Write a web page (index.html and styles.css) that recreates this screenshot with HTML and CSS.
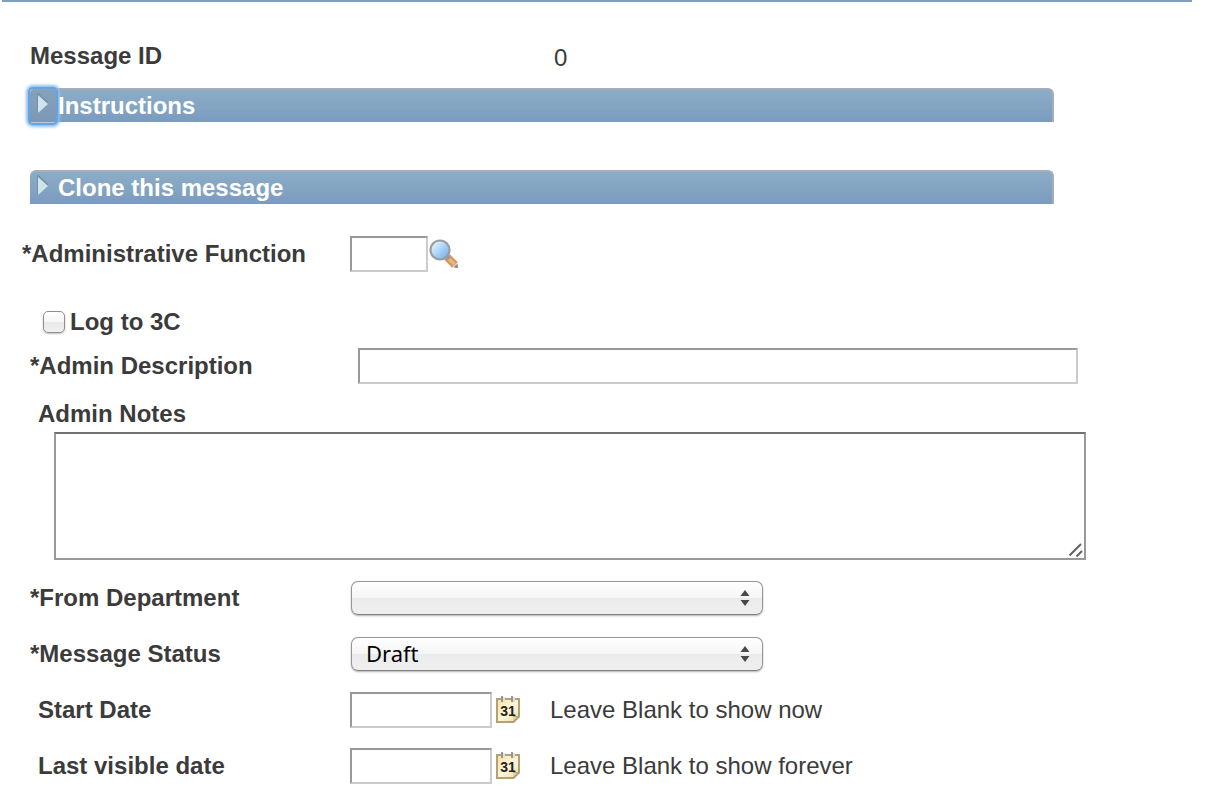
FILE: index.html
```html
<!DOCTYPE html>
<html lang="en">
<head>
<meta charset="utf-8">
<title>Message</title>
<link rel="stylesheet" href="styles.css">
</head>
<body>
<svg class="sprites" aria-hidden="true">
  <defs>
    <linearGradient id="lens" x1="0" y1="0" x2="1" y2="1">
      <stop offset="0.1" stop-color="#eaf6ff"/><stop offset="0.5" stop-color="#acd4f7"/><stop offset="1" stop-color="#62a8ea"/>
    </linearGradient>
    <linearGradient id="paper" x1="0" y1="0" x2="1" y2="1">
      <stop offset="0" stop-color="#f7e2a2"/><stop offset="0.5" stop-color="#fdf6dc"/><stop offset="1" stop-color="#f3dfa5"/>
    </linearGradient>
    <symbol id="calendar" viewBox="0 0 26 30">
      <path d="M1 3h24v19l-6 6H1z" fill="#b5a075"/>
      <path d="M3 5h20v16h-5v5H3z" fill="url(#paper)"/>
      <path d="M18 22h4l-4 4z" fill="#ead9ad"/>
      <path d="M7 1v6M17 1v6" stroke="#9b948c" stroke-width="2" fill="none"/>
      <path d="M9 2v5M19 2v5" stroke="#e5ddd0" stroke-width="2" fill="none"/>
    </symbol>
  </defs>
</svg>
<main class="page">
  <form class="form">
    <div class="row row-id">
      <span class="label">Message ID</span>
      <output class="value">0</output>
    </div>

    <h2 class="bar">
      <button type="button" class="toggle toggle-focused" aria-label="Expand Instructions">
        <svg width="14" height="22" viewBox="0 0 14 22"><path d="M2 20V1l10 9" fill="none" stroke="#7590ae" stroke-width="2"/><path d="M2 2l10 9-10 9z" fill="#cde6ea"/></svg>
      </button>
      <span>Instructions</span>
    </h2>

    <h2 class="bar bar-second">
      <button type="button" class="toggle" aria-label="Expand Clone this message">
        <svg width="14" height="22" viewBox="0 0 14 22"><path d="M2 20V1l10 9" fill="none" stroke="#7590ae" stroke-width="2"/><path d="M2 2l10 9-10 9z" fill="#cde6ea"/></svg>
      </button>
      <span>Clone this message</span>
    </h2>

    <div class="row row-function">
      <label class="label" for="function">*Administrative Function</label>
      <input class="field field-code" id="function" type="text">
      <button type="button" class="icon-button" aria-label="Look up Administrative Function">
        <svg width="32" height="32" viewBox="0 0 32 32">
          <path d="M19 19l8 8" stroke="#dc9468" stroke-width="8"/>
          <path d="M19 19l8 8" stroke="#e3bd76" stroke-width="3"/>
          <path d="M25.500 29.500l4-4 .5 4.500z" fill="#85829c"/>
          <path d="M17 17l4 4" stroke="#969696" stroke-width="4"/>
          <circle cx="12" cy="12" r="9.500" fill="url(#lens)" stroke="#9a9d9f" stroke-width="2.200"/>
        </svg>
      </button>
    </div>

    <div class="row row-check">
      <input class="check" id="log" type="checkbox">
      <label for="log">Log to 3C</label>
    </div>

    <div class="row row-description">
      <label class="label" for="description">*Admin Description</label>
      <input class="field field-wide" id="description" type="text">
    </div>

    <div class="row row-notes">
      <label class="indent" for="notes">Admin Notes</label>
    </div>
    <div class="notes">
      <textarea class="notes-text" id="notes"></textarea>
      <svg class="grip" width="16" height="16" viewBox="0 0 16 16" aria-hidden="true"><path d="M1.500 13.500L13 2M8.500 14.500L14 9" stroke="#606060" stroke-width="2"/></svg>
    </div>

    <div class="row spaced">
      <label class="label" for="department">*From Department</label>
      <span class="picker">
        <select class="select" id="department"><option></option></select>
        <svg class="arrows" width="10" height="18" viewBox="0 0 10 18" aria-hidden="true"><path d="M5 1l4.500 6h-9zM5 17l4.500-6h-9z" fill="#484848"/></svg>
      </span>
    </div>
    <div class="row spaced">
      <label class="label" for="status">*Message Status</label>
      <span class="picker">
        <select class="select" id="status"><option>Draft</option></select>
        <svg class="arrows" width="10" height="18" viewBox="0 0 10 18" aria-hidden="true"><path d="M5 1l4.500 6h-9zM5 17l4.500-6h-9z" fill="#484848"/></svg>
      </span>
    </div>
    <div class="row spaced">
      <label class="label indent" for="start">Start Date</label>
      <input class="field field-date" id="start" type="text">
      <button type="button" class="icon-button icon-date" aria-label="Choose start date"><svg width="26" height="30"><use href="#calendar"/><text class="day" x="13" y="21">31</text></svg></button>
      <span class="hint">Leave Blank to show now</span>
    </div>
    <div class="row spaced">
      <label class="label indent" for="last">Last visible date</label>
      <input class="field field-date" id="last" type="text">
      <button type="button" class="icon-button icon-date" aria-label="Choose last visible date"><svg width="26" height="30"><use href="#calendar"/><text class="day" x="13" y="21">31</text></svg></button>
      <span class="hint">Leave Blank to show forever</span>
    </div>
  </form>
</main>
</body>
</html>
```

FILE: styles.css
```css
* {
  box-sizing: border-box;
}

body {
  margin: 0;
  background: #fff;
  color: #3b3b3b;
  font: bold 24px/28px "Liberation Sans", Arial, sans-serif;
}

.sprites {
  position: absolute;
  width: 0;
  height: 0;
}

.page {
  margin: 0 24px 0 2px;
  border-top: 2px solid #7f9fbe;
}

.form {
  padding: 36px 106px 12px 28px;
}

.row {
  display: flex;
  align-items: center;
  min-height: 36px;
}

.spaced {
  margin-top: 20px;
}

.label {
  flex: 0 0 320px;
}

.indent {
  padding-left: 8px;
}

.value,
.hint {
  font-weight: normal;
}

.value {
  margin-left: 204px;
  padding-top: 4px;
}

.bar {
  display: flex;
  align-items: center;
  gap: 2px;
  height: 34px;
  margin: 14px 32px 0 0;
  border: solid #a5acbb;
  border-width: 2px 2px 0 0;
  border-radius: 6px 6px 0 0;
  background: linear-gradient(#8badc7, #84a5c2 50%, #7a9ac0);
  color: #fff;
  font-size: 24px;
}

.bar-second {
  margin-top: 48px;
}

.toggle {
  display: flex;
  align-items: flex-start;
  flex: 0 0 26px;
  height: 34px;
  padding: 4px 6px;
  border: 0;
  border-radius: 3px;
  background: transparent;
}

.toggle-focused {
  background: rgba(125, 150, 178, 0.5);
  box-shadow: 0 0 0 2px #65a3e1, 0 0 3px 4px #8fbfed;
}

.toggle svg {
  flex: none;
}

.field {
  height: 36px;
  margin: 0;
  padding: 2px 6px;
  border: 2px solid;
  border-color: #999 #ccc #ccc #999;
  background: #fff;
  font: 24px "Liberation Sans", Arial, sans-serif;
}

.field-code {
  width: 78px;
}

.field-wide {
  flex: 1;
  min-width: 0;
  margin: 0 8px;
}

.field-date {
  width: 142px;
}

.icon-button {
  display: flex;
  padding: 0;
  border: 0;
  background: transparent;
}

.icon-date {
  width: 26px;
  margin: 0 29px 0 3px;
}

.day {
  fill: #24211d;
  font: bold 14px "Liberation Sans", Arial, sans-serif;
  text-anchor: middle;
}

.row-function {
  margin: 32px 0 0 -8px;
}

.row-function .label {
  flex-basis: 328px;
}

.row-check {
  margin-top: 32px;
  padding-left: 13px;
  gap: 5px;
}

.check {
  appearance: none;
  width: 22px;
  height: 22px;
  margin: 0;
  border: 1px solid #8f8f8f;
  border-radius: 5px;
  background: linear-gradient(#fff 10%, #f5f5f5 50%, #e8e8e8 50%, #f0f0f0);
  box-shadow: 0 1px 2px rgba(0, 0, 0, 0.25);
}

.row-description {
  margin-top: 8px;
}

.row-notes {
  margin-top: 12px;
}

.notes {
  position: relative;
  display: flex;
  margin-left: 24px;
}

.notes-text {
  flex: 1;
  height: 128px;
  margin: 0;
  padding: 4px;
  border: 2px solid #999;
  border-top-color: #707070;
  border-radius: 0;
  resize: none;
  font: 24px/28px "Liberation Sans", Arial, sans-serif;
}

.grip {
  position: absolute;
  right: 2px;
  bottom: 2px;
}

.picker {
  position: relative;
  display: flex;
  width: 414px;
  padding: 1px;
}

.select {
  appearance: none;
  width: 100%;
  height: 34px;
  margin: 0;
  padding: 0 36px 2px 14px;
  border: 1px solid #969696;
  border-bottom-color: #7f7f7f;
  border-radius: 7px;
  background: linear-gradient(#fff, #f5f5f5 50%, #ebebeb 50%, #efefef);
  box-shadow: 0 1px 2px rgba(0, 0, 0, 0.3);
  color: #000;
  font: 22px/30px "Noto Sans", sans-serif;
}

.arrows {
  position: absolute;
  top: 9px;
  right: 14px;
  pointer-events: none;
}
```
